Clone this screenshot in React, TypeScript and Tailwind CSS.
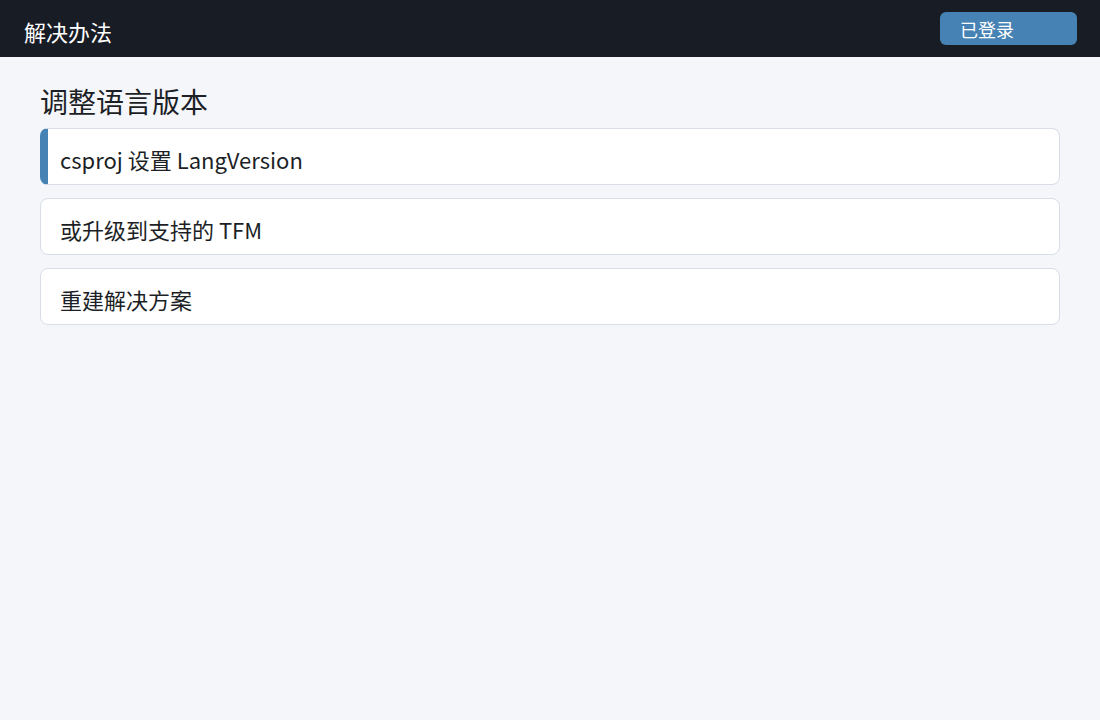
const steps = [
	{ label: 'csproj 设置 LangVersion', active: true },
	{ label: '或升级到支持的 TFM', active: false },
	{ label: '重建解决方案', active: false },
];

export default function App() {
	return (
		<div
			className="min-h-screen bg-[#f5f6fa] text-[#1c1f26]"
			style={{ fontFamily: '"Noto Sans CJK SC", "Noto Sans", sans-serif' }}
		>
			{/* Top bar */}
			<header className="h-[57px] bg-[#181c25] flex items-center justify-between pl-6 pr-[23px]">
				<h1 className="text-[22px] leading-none text-white pt-[5px]">解决办法</h1>
				<button className="w-[137px] h-[33px] rounded-[6px] bg-[#4682b4] text-white text-[18px] leading-none text-left pl-[20px]">
					已登录
				</button>
			</header>

			<main className="px-10 pt-[25px]">
				<h2 className="text-[28px] leading-[38px] mb-[8px]">调整语言版本</h2>
				<ul className="flex flex-col gap-[13px]">
					{steps.map(step => (
						<li
							key={step.label}
							className={`h-[57px] flex items-center pt-[5px] bg-white rounded-[8px] border border-[#d9dde7] text-[22px] ${
								step.active ? 'border-l-[8px] border-l-[#4682b4] pl-[12px]' : 'pl-[19px]'
							}`}
						>
							{step.label}
						</li>
					))}
				</ul>
			</main>
		</div>
	);
}
